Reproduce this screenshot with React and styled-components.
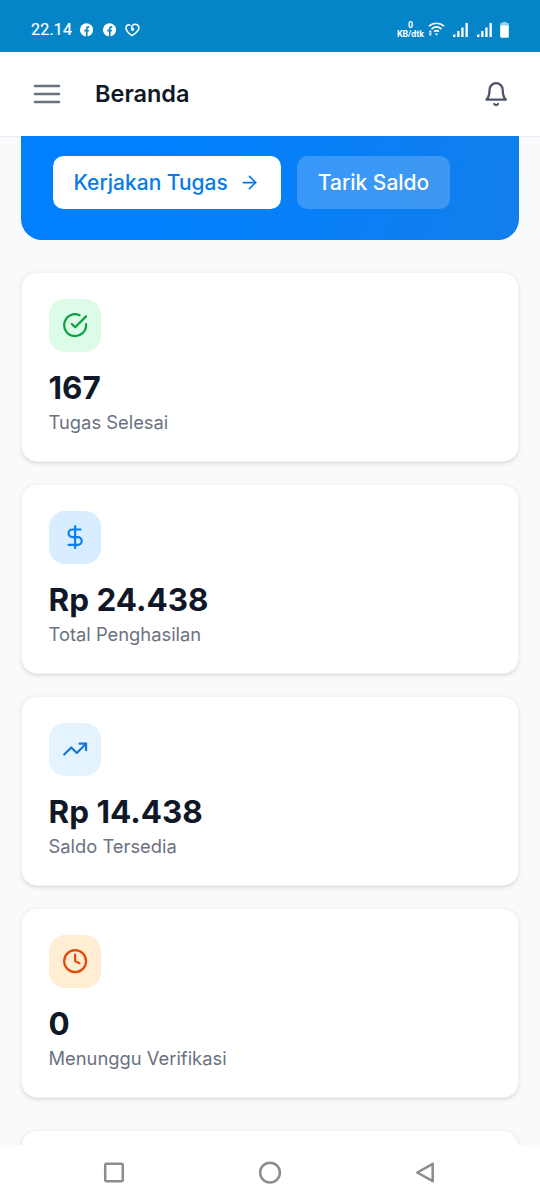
import React from 'react';
import styled, { createGlobalStyle } from 'styled-components';
import { ArrowRight, Clock, DollarSign, TrendingUp } from 'lucide-react';

const GlobalStyle = createGlobalStyle`
  * {
    box-sizing: border-box;
  }

  body {
    margin: 0;
    background: #f9fafb;
    font-family: Inter, "Liberation Sans", sans-serif;
  }
`;

const Screen = styled.div`
  display: flex;
  flex-direction: column;
  width: 540px;
  height: 1200px;
  overflow: hidden;
  background: #f9fafc;
`;

const StatusBar = styled.div`
  display: flex;
  flex: none;
  align-items: center;
  justify-content: space-between;
  height: 52px;
  padding: 7px 30px 0 31px;
  background: #0585c8;
  color: #fff;
  font-family: Roboto, sans-serif;
`;

const StatusGroup = styled.div`
  display: flex;
  align-items: center;
`;

const Time = styled.span`
  width: 48px;
  font-size: 16px;
  font-weight: 400;
  line-height: 20px;
  letter-spacing: 0.2px;
  -webkit-text-stroke: 0.2px #fff;
`;

const NetSpeed = styled.div`
  display: flex;
  flex-direction: column;
  align-items: center;
  margin-right: 4px;
  font-size: 8.8px;
  font-weight: 700;
  line-height: 9px;
`;

const StatusSvg = styled.svg`
  margin-left: ${props => props.$left || 0}px;
  margin-right: ${props => props.$right || 0}px;
`;

const Header = styled.header`
  display: flex;
  flex: none;
  align-items: center;
  height: 84px;
  padding: 0 31px;
  background: #fff;
  box-shadow: 0 1px 0 #e9ebee;
`;

const Title = styled.h1`
  flex: 1;
  margin: 0 0 0 32px;
  color: #101828;
  font-size: 23.5px;
  font-weight: 600;
  line-height: 32px;
`;

const Content = styled.main`
  flex: 1;
  min-height: 0;
  padding: 0 21px;
  overflow: hidden;
`;

const Hero = styled.section`
  display: flex;
  align-items: flex-start;
  gap: 16px;
  height: 104px;
  margin-bottom: 32px;
  padding: 20px 31.5px;
  border-radius: 0 0 21px 21px;
  background: linear-gradient(100deg, #0080ff 25%, #127eec 100%);
`;

const HeroButton = styled.button`
  display: flex;
  align-items: center;
  gap: 11px;
  height: 52.5px;
  padding: 0 21px;
  border: none;
  border-radius: 10.5px;
  background: ${props => (props.$ghost ? 'rgba(255, 255, 255, 0.2)' : '#fff')};
  color: ${props => (props.$ghost ? '#fff' : '#087be9')};
  font-family: inherit;
  font-size: 20.98px;
  font-weight: 500;
  white-space: nowrap;
`;

const Cards = styled.div`
  display: flex;
  flex-direction: column;
  gap: 22px;
`;

const Card = styled.article`
  flex: none;
  height: 190px;
  margin-bottom: ${props => (props.$last ? '10px' : '0')};
  padding: 26px 26.5px;
  border: 1px solid #f4f5f7;
  border-radius: 16px;
  background: #fff;
  box-shadow: 0 1.3px 4px rgba(0, 0, 0, 0.09), 0 1.3px 2.6px -1.3px rgba(0, 0, 0, 0.09);
`;

const IconTile = styled.div`
  display: flex;
  align-items: center;
  justify-content: center;
  width: 52.5px;
  height: 52.5px;
  margin-bottom: 15.5px;
  border-radius: 16px;
  background: ${props => props.$bg};
  color: ${props => props.$color};
`;

const Value = styled.div`
  color: #101828;
  font-size: 31.45px;
  font-weight: 700;
  line-height: 42px;
`;

const Label = styled.div`
  color: #6a7282;
  font-size: 18.35px;
  line-height: 26px;
`;

const NavBar = styled.nav`
  display: flex;
  flex: none;
  align-items: center;
  justify-content: space-between;
  height: 55px;
  padding: 0 102px;
  background: #fff;
`;

const FacebookIcon = () => (
  <StatusSvg $right={9} width="14" height="14" viewBox="0 0 14 14">
    <circle cx="7.5" cy="6.8" r="6.6" fill="#fff" />
    <path d="M7.7 14V7.7M5.3 7.7h4.5M7.7 8V5.8c0-1.4.9-2 2.5-1.8" fill="none" stroke="#0585c8" strokeWidth="1.7" />
  </StatusSvg>
);

const HeartIcon = () => (
  <StatusSvg width="16" height="14" viewBox="0 0 16 14" fill="none" stroke="#fff" strokeWidth="1.5" strokeLinecap="round" strokeLinejoin="round">
    <path d="M5 2.2C3.2 1.2 1 2.4 1 5c0 3 3 5.6 6 7.7C10.5 10.5 14 8 13.9 4.8 13.8 1.2 9.500.4 7.4 2.6 6.300 3.800 6.300 6.300 7.300 7.200c.9.3 1.300-.7.900-2" />
  </StatusSvg>
);

const WifiIcon = () => (
  <svg width="17" height="15" viewBox="0 0 17 15" fill="none" stroke="#fff" strokeWidth="1.6">
    <path d="M.8 4.2c4.5-4 10.8-4 15.3 0M3.5 7.1c3-2.6 7-2.6 10 0M6.1 9.7c1.5-1.3 3.3-1.3 4.8 0" />
    <path d="M6.9 11.4h3.2L8.5 13.8zM.6 10.4h3.4L2.3 8zM.6 11.6h3.4l-1.7 2.4z" fill="#fff" stroke="none" />
  </svg>
);

const SignalIcon = () => (
  <StatusSvg $left={8} width="16" height="14" viewBox="0 0 16 14" fill="#fff">
    <rect x="0" y="11.5" width="2.5" height="2.5" />
    <rect x="4.2" y="8" width="2.3" height="6" />
    <rect x="8.3" y="4.5" width="2.3" height="9.5" />
    <rect x="12.5" y="0" width="2.3" height="14" />
  </StatusSvg>
);

const BatteryIcon = () => (
  <StatusSvg $left={7} $right={1} width="9" height="16" viewBox="0 0 9 16">
    <path d="M2.5 0h4v1h1.2c.7 0 1.1.5 1.1 1.2V4H.2V2.2C.2 1.5.6 1 1.3 1h1.2z" fill="#9bd0ea" />
    <path d="M.2 3.5h8.6v11c0 .7-.4 1.2-1.1 1.2H1.3c-.7 0-1.1-.5-1.1-1.2z" fill="#fff" />
  </StatusSvg>
);

const MenuIcon = () => (
  <svg width="32" height="32" viewBox="0 0 24 24" fill="none" stroke="#6a7282" strokeWidth="1.9" strokeLinecap="round">
    <path d="M3 6h18M3 12h18M3 18h18" />
  </svg>
);

const BellIcon = () => (
  <svg width="26.25" height="26.25" viewBox="0 0 24 24" fill="none" stroke="#4a5565" strokeWidth="2" strokeLinecap="round" strokeLinejoin="round">
    <path d="M6 8a6 6 0 0 1 12 0c0 7 3 9 3 9H3s3-2 3-9" />
    <path d="M10.3 21a1.94 1.94 0 0 0 3.4 0" />
  </svg>
);

const CheckCircle = ({ size }) => (
  <svg width={size} height={size} viewBox="0 0 24 24" fill="none" stroke="currentColor" strokeWidth="2" strokeLinecap="round" strokeLinejoin="round">
    <path d="M22 11.08V12a10 10 0 1 1-5.93-9.14" />
    <path d="m9 11 3 3L22 4" />
  </svg>
);

const stats = [
  { icon: CheckCircle, value: '167', label: 'Tugas Selesai', bg: '#dcfce7', color: '#0ca043' },
  { icon: DollarSign, value: 'Rp 24.438', label: 'Total Penghasilan', bg: '#d8edff', color: '#0880ed' },
  { icon: TrendingUp, value: 'Rp 14.438', label: 'Saldo Tersedia', bg: '#e5f3ff', color: '#1278d8' },
  { icon: Clock, value: '0', label: 'Menunggu Verifikasi', bg: '#ffedd4', color: '#e34a08' },
];

const App = () => (
  <>
    <GlobalStyle />
    <Screen>
      <StatusBar>
        <StatusGroup>
          <Time>22.14</Time>
          <FacebookIcon />
          <FacebookIcon />
          <HeartIcon />
        </StatusGroup>
        <StatusGroup>
          <NetSpeed>
            <span>0</span>
            <span>KB/dtk</span>
          </NetSpeed>
          <WifiIcon />
          <SignalIcon />
          <SignalIcon />
          <BatteryIcon />
        </StatusGroup>
      </StatusBar>
      <Header>
        <MenuIcon />
        <Title>Beranda</Title>
        <BellIcon />
      </Header>
      <Content>
        <Hero>
          <HeroButton>
            Kerjakan Tugas
            <ArrowRight size={21} />
          </HeroButton>
          <HeroButton $ghost>Tarik Saldo</HeroButton>
        </Hero>
        <Cards>
          {stats.map(({ icon: Icon, value, label, bg, color }, i) => (
            <Card key={label} $last={i === stats.length - 1}>
              <IconTile $bg={bg} $color={color}>
                <Icon size={26.25} />
              </IconTile>
              <Value>{value}</Value>
              <Label>{label}</Label>
            </Card>
          ))}
          <Card />
        </Cards>
      </Content>
      <NavBar>
        <svg width="24" height="24" viewBox="0 0 24 24" fill="none" stroke="#8c8c8c" strokeWidth="2.5">
          <rect x="3.2" y="2.7" width="17.6" height="17.6" rx="1.2" />
        </svg>
        <svg width="24" height="24" viewBox="0 0 24 24" fill="none" stroke="#8c8c8c" strokeWidth="2.5">
          <circle cx="12" cy="11.6" r="9.9" />
        </svg>
        <svg width="24" height="24" viewBox="0 0 24 24" fill="none" stroke="#8c8c8c" strokeWidth="2.5" strokeLinejoin="round">
          <path d="M3.3 11.5 18.7 2.8v17.400z" />
        </svg>
      </NavBar>
    </Screen>
  </>
);

export default App;
